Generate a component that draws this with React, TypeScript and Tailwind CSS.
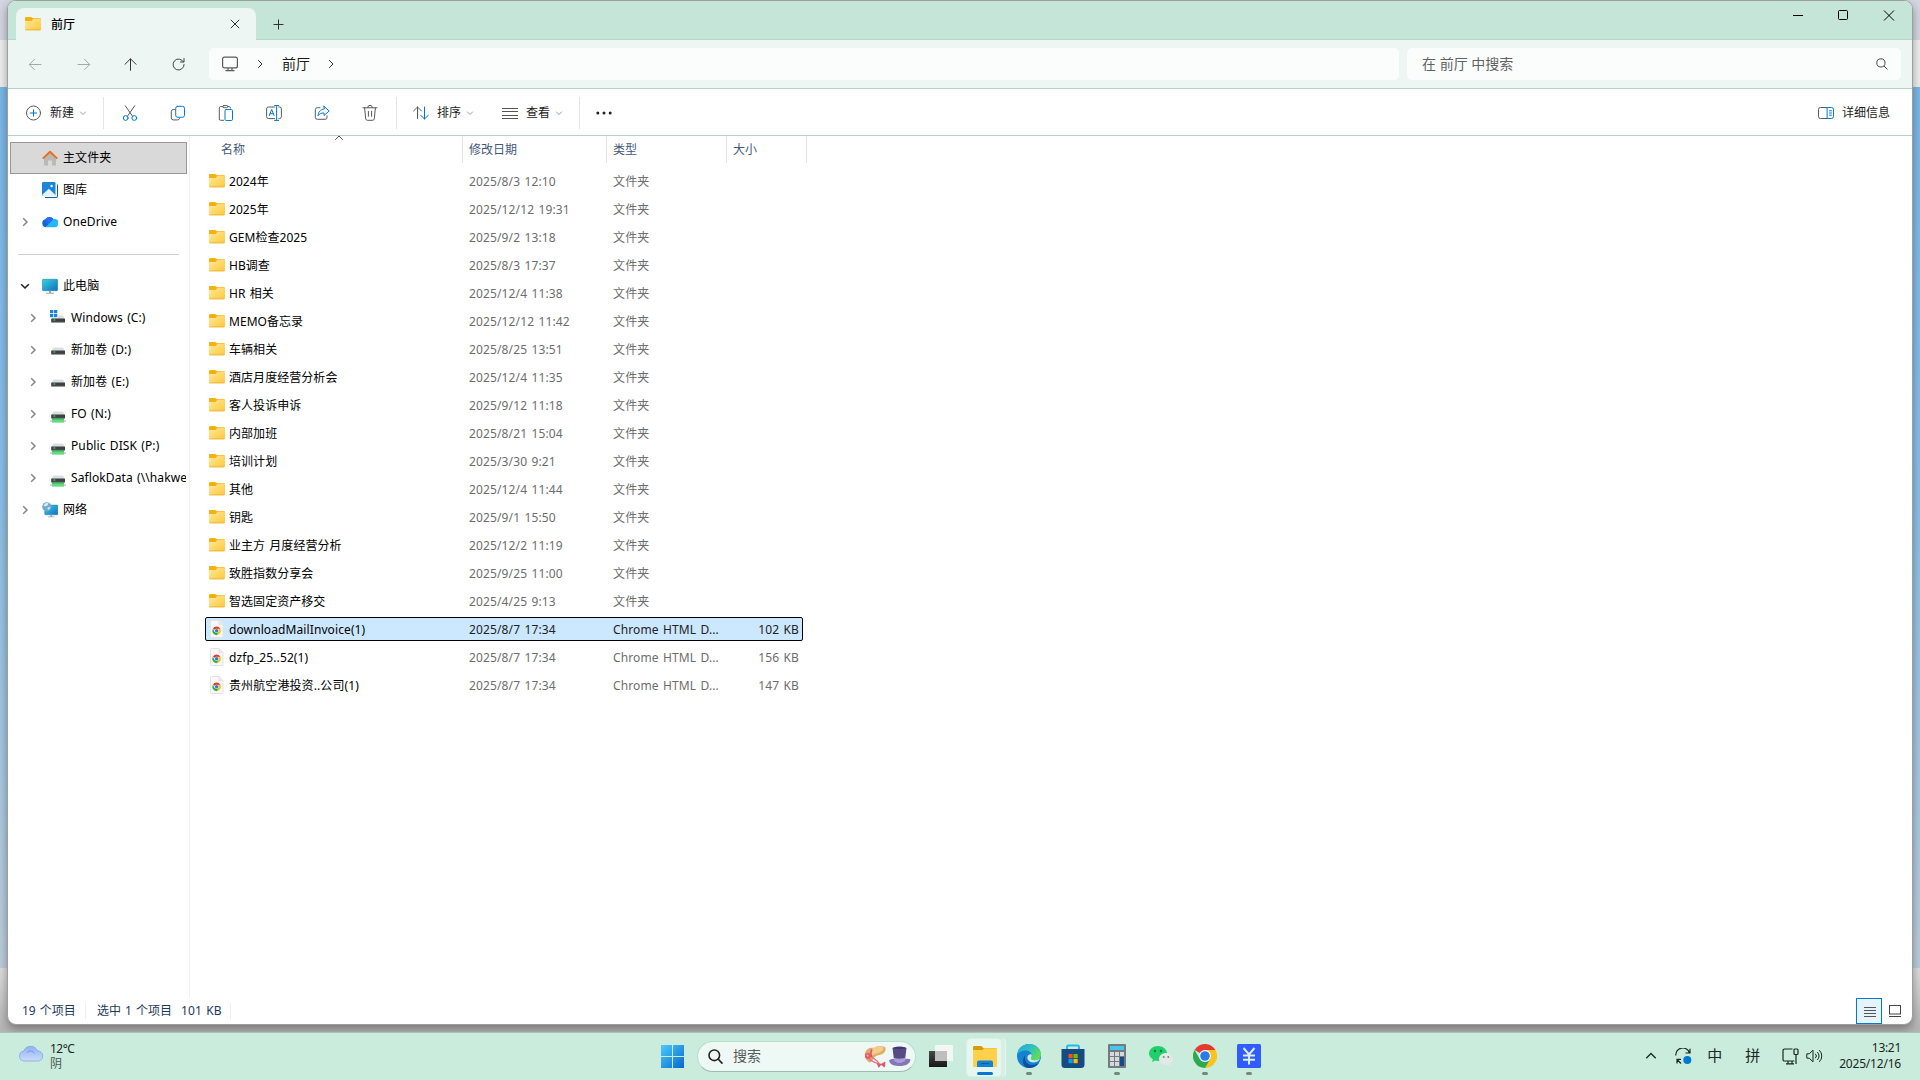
import type { ReactNode } from 'react'
import clsx from 'clsx'

type FileRow = {
  name: string
  date: string
  size?: string
  selected?: boolean
}

const files: FileRow[] = [
  { name: '2024年', date: '2025/8/3 12:10' },
  { name: '2025年', date: '2025/12/12 19:31' },
  { name: 'GEM检查2025', date: '2025/9/2 13:18' },
  { name: 'HB调查', date: '2025/8/3 17:37' },
  { name: 'HR 相关', date: '2025/12/4 11:38' },
  { name: 'MEMO备忘录', date: '2025/12/12 11:42' },
  { name: '车辆相关', date: '2025/8/25 13:51' },
  { name: '酒店月度经营分析会', date: '2025/12/4 11:35' },
  { name: '客人投诉申诉', date: '2025/9/12 11:18' },
  { name: '内部加班', date: '2025/8/21 15:04' },
  { name: '培训计划', date: '2025/3/30 9:21' },
  { name: '其他', date: '2025/12/4 11:44' },
  { name: '钥匙', date: '2025/9/1 15:50' },
  { name: '业主方 月度经营分析', date: '2025/12/2 11:19' },
  { name: '致胜指数分享会', date: '2025/9/25 11:00' },
  { name: '智选固定资产移交', date: '2025/4/25 9:13' },
  { name: 'downloadMailInvoice(1)', date: '2025/8/7 17:34', size: '102 KB', selected: true },
  { name: 'dzfp_25..52(1)', date: '2025/8/7 17:34', size: '156 KB' },
  { name: '贵州航空港投资..公司(1)', date: '2025/8/7 17:34', size: '147 KB' },
]

function Folder() {
  return (
    <svg width="16" height="14" viewBox="0 0 16 14" className="shrink-0">
      <defs>
        <linearGradient id="folder" x1="0" y1="0" x2="1" y2="1">
          <stop offset="0" stopColor="#ffe7a0" />
          <stop offset="1" stopColor="#ffca35" />
        </linearGradient>
      </defs>
      <path d="M0 1.200C0 .5.5 0 1.200 0h4.600c.4 0 .7.100 1 .4L8 1.200h6.900c.6 0 1.100.5 1.100 1.100V6H0z" fill="#f5b10f" />
      <path d="M0 4h6.600L8.200 2H15c.6 0 1 .4 1 1v9c0 .7-.5 1.200-1.200 1.200H1.200C.5 13.200 0 12.700 0 12z" fill="url(#folder)" />
      <path d="M.4 12.900h15.200" stroke="#e9a92c" strokeWidth=".7" />
    </svg>
  )
}

function ChromeDoc() {
  return (
    <svg width="16" height="18" viewBox="0 0 16 18" className="shrink-0">
      <path d="M1.500 1.500a1 1 0 0 1 1-1h7.500l4 4v12a1 1 0 0 1-1 1H2.500a1 1 0 0 1-1-1z" fill="#f8f8f8" stroke="#e2e2e2" />
      <path d="M10 .5v4h4" fill="#e9e9e9" stroke="#dadada" strokeWidth=".6" />
      <g transform="translate(3.300 6.500) scale(.36)">
        <ChromeShapes />
      </g>
    </svg>
  )
}

function ChromeShapes() {
  return (
    <>
      <path d="M12 12 1.600 6A12 12 0 0 1 22.400 6z" fill="#e33b2e" />
      <path d="M12 12V6h10.400A12 12 0 0 1 12 24z" fill="#fcc31e" />
      <path d="M12 12 6.800 15 1.600 6A12 12 0 0 0 12 24l5.200-9z" fill="#2da94f" />
      <circle cx="12" cy="12" r="6" fill="#fff" />
      <circle cx="12" cy="12" r="4.800" fill="#2a7de9" />
    </>
  )
}

function Chevron({ dir, className }: { dir: 'right' | 'down' | 'up'; className?: string }) {
  return (
    <svg
      width="10"
      height="10"
      viewBox="0 0 10 10"
      fill="none"
      stroke="currentColor"
      className={clsx('shrink-0', dir === 'down' && 'rotate-90', dir === 'up' && '-rotate-90', className)}
    >
      <path d="M3.200 1.200 7 5 3.200 8.800" />
    </svg>
  )
}

function Line({ size = 16, children }: { size?: number; children: ReactNode }) {
  return (
    <svg width={size} height={size} viewBox="0 0 16 16" fill="none" stroke="#5a5a5a" strokeLinecap="round" strokeLinejoin="round" className="shrink-0">
      {children}
    </svg>
  )
}

function TitleBar() {
  return (
    <div className="flex h-[39px] border-b border-[#b5d8ca] bg-[#c6e5d9]">
      <div className="ml-2 mt-[7px] flex h-[33px] w-60 shrink-0 items-center rounded-t-lg bg-[#edf6f3] pb-px pl-[9px]">
        <Folder />
        <span className="ml-[10px] w-[179px] pt-[2px] text-xs font-medium text-black">前厅</span>
        <svg width="10" height="10" viewBox="0 0 10 10" stroke="#333">
          <path d="M.8.800l8.400 8.400M9.200.800.800 9.200" />
        </svg>
      </div>
      <svg width="11" height="11" viewBox="0 0 11 11" stroke="#333" className="ml-[17px] mt-[18px]">
        <path d="M5.500.500v10M.5 5.500h10" />
      </svg>
      <div className="ml-auto flex pt-[9px] pr-[17px]">
        <svg width="102" height="11" viewBox="0 0 102 11" fill="none" stroke="#000">
          <path d="M0 5.500h10" />
          <rect x="45.500" y=".5" width="9" height="9" rx="1" />
          <path d="M91 .5l10 10M101 .5 91 10.500" />
        </svg>
      </div>
    </div>
  )
}

function NavBar() {
  return (
    <div className="flex h-[49px] items-center border-b border-[#b5d3c9] bg-[#edf6f3]">
      <svg width="160" height="14" viewBox="0 0 160 14" fill="none" stroke="#a3a9a7" strokeLinecap="round" strokeLinejoin="round" className="ml-5 shrink-0">
        <path d="M13 7.500H1.500M6.500 2.300 1.300 7.500l5.200 5.200" />
        <path d="M50 7.500h11.500M56.500 2.300l5.200 5.200-5.200 5.200" />
        <path d="M102.500 13.300V2M97 7.300 102.500 1.800l5.500 5.500" stroke="#333" />
        <path d="M155.500 5a5.500 5.500 0 1 0 .6 2.500M156 1.500V5h-3.600" stroke="#444" />
      </svg>
      <div className="ml-[21px] flex h-8 w-[1190px] items-center rounded-[5px] bg-[#fbfdfc] pl-[13px]">
        <svg width="16" height="16" viewBox="0 0 16 16" fill="none" stroke="#5a5a5a">
          <rect x=".6" y="1.100" width="14.800" height="10.800" rx="2" strokeWidth="1.200" />
          <path d="M6 12v2.500M10 12v2.500M3.500 14.700h9" strokeWidth="1.200" />
        </svg>
        <Chevron dir="right" className="ml-[17px] text-[#333]" />
        <span className="ml-[17px] text-sm leading-5 text-[#1b1b1b]">前厅</span>
        <Chevron dir="right" className="ml-[16px] text-[#333]" />
      </div>
      <div className="ml-2 flex h-8 w-[494px] items-center rounded-[5px] bg-[#fbfdfc] pl-[15px] pr-[13px] text-sm text-[#5f6462]">
        <span>在 前厅 中搜索</span>
        <svg width="12" height="12" viewBox="0 0 12 12" fill="none" stroke="#4a4a4a" className="ml-auto">
          <circle cx="4.900" cy="4.900" r="4.100" />
          <path d="m7.900 7.900 3.600 3.600" />
        </svg>
      </div>
    </div>
  )
}

function ToolBar() {
  return (
    <div className="flex h-[47px] shrink-0 items-center border-b border-[#b5d3c9] pl-[18px] pt-[2px] text-xs text-[#1b1b1b]">
      <Line>
        <circle cx="7.500" cy="8" r="7" />
        <path d="M7.500 4.800v6.400M4.300 8h6.400" stroke="#0078d4" />
      </Line>
      <span className="ml-2">新建</span>
      <Chevron dir="down" className="ml-1 scale-75 text-[#777]" />
      <div className="ml-[15px] h-8 w-px bg-[#e4e4e4]" />
      <div className="ml-[18px] flex gap-8">
        <Line>
          <path d="M3.300.800 10.400 11M12.700.800 5.600 11" />
          <circle cx="3.700" cy="13" r="2.400" stroke="#0078d4" />
          <circle cx="12.300" cy="13" r="2.400" stroke="#0078d4" />
        </Line>
        <Line>
          <path d="M4.500 4.500H3.300a2 2 0 0 0-2 2v6.400a2 2 0 0 0 2 2h4.400a2 2 0 0 0 1.800-1.400" />
          <rect x="5.700" y="1.300" width="8.800" height="11" rx="2" stroke="#0078d4" />
        </Line>
        <Line>
          <path d="M5.500 15.300H2.600a1.300 1.300 0 0 1-1.300-1.300V2.900a1.300 1.300 0 0 1 1.300-1.300h2.200M10 1.600h1.200a1.300 1.300 0 0 1 1.300 1.300" />
          <rect x="4.800" y=".5" width="5" height="2.200" rx="1.100" />
          <rect x="7" y="4.500" width="7.500" height="11" rx="1.200" stroke="#0078d4" />
        </Line>
        <Line>
          <path d="M8.500 2H2.600A2 2 0 0 0 .6 4v7.600a2 2 0 0 0 2 2h5.900M12.800 2h.6a2 2 0 0 1 2 2v7.600a2 2 0 0 1-2 2h-.6" />
          <path d="M10.600.600v14.800M8.600.600h4M8.600 15.400h4M3.300 10.500 5.700 4.500l2.400 6M4 8.700h3.400" stroke="#0078d4" />
        </Line>
        <Line>
          <path d="M6 2.700H3.300a2 2 0 0 0-2 2v7.600a2 2 0 0 0 2 2H11a2 2 0 0 0 2-2v-1.500" />
          <path d="M10 1.300 15.200 6 10 10.500V8C7.200 7.900 5.500 8.700 4 10.800 4.300 7 6.200 4.400 10 4z" stroke="#0078d4" />
        </Line>
        <Line>
          <path d="M1 2.800h14M2.600 2.800l1.100 11a1.700 1.700 0 0 0 1.700 1.500h5.200a1.700 1.700 0 0 0 1.700-1.500l1.100-11M5.700 2.600a2.300 2.300 0 0 1 4.600 0M6.400 6.300v5M9.600 6.300v5" />
        </Line>
      </div>
      <div className="ml-[18px] h-8 w-px bg-[#e4e4e4]" />
      <div className="ml-4 flex items-center">
        <Line>
          <path d="M4.500 13.500V2M.6 5.900 4.500 2l3.900 3.900" />
          <path d="M11.500 2v12M7.700 10.200l3.800 3.800 3.900-3.800" stroke="#0078d4" />
        </Line>
        <span className="ml-2">排序</span>
        <Chevron dir="down" className="ml-1 scale-75 text-[#777]" />
      </div>
      <svg width="16" height="11" viewBox="0 0 16 11" stroke="#555" className="ml-[27px]">
        <path d="M0 .5h16M0 3.500h16M0 7.500h16M0 10.500h16" />
      </svg>
      <span className="ml-2">查看</span>
      <Chevron dir="down" className="ml-1 scale-75 text-[#777]" />
      <div className="ml-[15px] h-8 w-px bg-[#e4e4e4]" />
      <svg width="16" height="4" viewBox="0 0 16 4" fill="#222" className="ml-4">
        <circle cx="1.800" cy="2" r="1.500" />
        <circle cx="8" cy="2" r="1.500" />
        <circle cx="14.200" cy="2" r="1.500" />
      </svg>
      <div className="ml-auto flex items-center gap-2 pr-[22px]">
        <Line>
          <path d="M9.300 2.500H2.500a2 2 0 0 0-2 2v7a2 2 0 0 0 2 2h6.800" />
          <path d="M9.500 2.500h4a2 2 0 0 1 2 2v7a2 2 0 0 1-2 2h-4zM11.500 5.800h2M11.500 8h2M11.500 10.200h2" stroke="#0078d4" />
        </Line>
        <span>详细信息</span>
      </div>
    </div>
  )
}

const homeIcon = (
  <svg width="16" height="16" viewBox="0 0 16 16">
    <path d="M2 7.500 8 2.200l6 5.300v7a1 1 0 0 1-1 1h-3v-5H6v5H3a1 1 0 0 1-1-1z" fill="#b9b9b9" />
    <path d="M.8 8.600 8 1.700l7.200 6.900" fill="none" stroke="#e8701c" strokeWidth="2" strokeLinejoin="round" />
  </svg>
)

const galleryIcon = (
  <svg width="16" height="16" viewBox="0 0 16 16">
    <path d="M3 2.500h13V14a2 2 0 0 1-2 2H3z" fill="#0b5fa8" />
    <rect x="2" y="1.500" width="13" height="13.500" rx="1" fill="#fff" />
    <rect width="13.500" height="14" rx="1.300" fill="#1a86d9" />
    <path d="M0 13 6.800 6.800 13.500 13c-.2.700-.6 1-1.300 1H1.300C.6 14 .2 13.700 0 13z" fill="#e4f2fc" />
    <circle cx="9.600" cy="4" r="1.200" fill="#fff" />
  </svg>
)

const cloudIcon = (
  <svg width="16" height="16" viewBox="0 0 16 16">
    <path d="M4 13.200a4 4 0 0 1-.6-7.900A5 5 0 0 1 12 5.800z" fill="#1565d8" />
    <path d="M3.600 4.900a5 5 0 0 1 8.600 1.500L6 10.500z" fill="#2a6df0" />
    <path d="M3.800 13.300 10 6.800a3.300 3.300 0 0 1 6 3.200 3.300 3.300 0 0 1-3.300 3.300z" fill="#25b7fb" />
  </svg>
)

const monitorShapes = (
  <>
    <defs>
      <linearGradient id="screen" x1="0" y1="0" x2="1" y2="1">
        <stop offset="0" stopColor="#35d3dc" />
        <stop offset="1" stopColor="#0f6fc0" />
      </linearGradient>
    </defs>
    <rect x=".3" y="1.300" width="15.400" height="11.400" rx="1" fill="url(#screen)" stroke="#2581ad" strokeWidth=".6" />
    <path d="M7 13h2v2H7zM4 14.700h8v1H4z" fill="#9aa7b0" />
  </>
)

const pcIcon = (
  <svg width="16" height="16" viewBox="0 0 16 16">
    {monitorShapes}
  </svg>
)

const networkIcon = (
  <svg width="16" height="16" viewBox="0 0 16 16">
    <g transform="translate(2.500 2) scale(.85)">{monitorShapes}</g>
    <circle cx="4.800" cy="4.800" r="4.600" fill="#6fa9cf" />
    <path d="M1.500 3.500C3 1 5 .6 6.500 1.200 5.800 3.500 3.800 5.500 1.500 3.500zM5 6l3.500-1.500L7 8z" fill="#d8edf8" />
  </svg>
)

function Drive({ kind }: { kind: 'system' | 'local' | 'net' }) {
  return (
    <svg width="16" height="16" viewBox="0 0 16 16" className="overflow-visible">
      {kind === 'net' && (
        <>
          <path d="M2 12h12v4.500H2z" fill="#35d455" />
          <path d="M0 15h16" stroke="#8f9a92" strokeWidth=".8" />
          <path d="M2 15h12" stroke="#7cf394" />
        </>
      )}
      <path d="M3.500 5.500h9.300L15 9H1.300z" fill="#dcdfe2" />
      <rect x="1.200" y="8.500" width="13.800" height="4" rx=".5" fill="#3d3f42" />
      <path d="M1.200 12.300H15" stroke="#9a9a9a" strokeWidth=".6" />
      <path d="M3.500 10h1.800" stroke="#46e35e" strokeWidth="1.200" />
      {kind === 'system' && (
        <>
          <path d="M0 0h8v8H0z" fill="#fff" />
          <path d="M0 0h3.300v3.300H0zM4 0h3.300v3.300H4zM0 4h3.300v3.300H0zM4 4h3.300v3.300H4z" fill="#1786dc" />
        </>
      )}
    </svg>
  )
}

function NavItem({
  label,
  icon,
  arrow,
  nested,
  active,
}: {
  label: string
  icon: ReactNode
  arrow?: 'right' | 'down'
  nested?: boolean
  active?: boolean
}) {
  return (
    <div
      className={clsx(
        'flex h-8 w-[177px] items-center overflow-hidden border text-xs',
        nested ? 'pl-[17px]' : 'pl-[9px]',
        active ? 'border-[#999] bg-[#d9d9d9]' : 'border-transparent'
      )}
    >
      <span className="flex w-[22px] shrink-0">
        {arrow && <Chevron dir={arrow} className={clsx('stroke-[1.5]', arrow === 'down' ? 'text-[#222]' : 'text-[#858585]')} />}
      </span>
      <span className="shrink-0">{icon}</span>
      <span className="ml-[5px] whitespace-nowrap tracking-[0.1px] text-black [word-spacing:1px]">{label}</span>
    </div>
  )
}

function SideBar() {
  return (
    <div className="h-[862px] w-[182px] shrink-0 border-r border-[#f0f0f0] pl-[2px] pt-[6px]">
      <NavItem label="主文件夹" icon={homeIcon} active />
      <NavItem label="图库" icon={galleryIcon} />
      <NavItem label="OneDrive" icon={cloudIcon} arrow="right" />
      <div className="flex h-8 items-center pl-2">
        <div className="h-px w-[161px] bg-[#cfcfcf]" />
      </div>
      <NavItem label="此电脑" icon={pcIcon} arrow="down" />
      <NavItem label="Windows (C:)" icon={<Drive kind="system" />} arrow="right" nested />
      <NavItem label="新加卷 (D:)" icon={<Drive kind="local" />} arrow="right" nested />
      <NavItem label="新加卷 (E:)" icon={<Drive kind="local" />} arrow="right" nested />
      <NavItem label="FO (N:)" icon={<Drive kind="net" />} arrow="right" nested />
      <NavItem label="Public DISK (P:)" icon={<Drive kind="net" />} arrow="right" nested />
      <NavItem label="SaflokData (\\hakwe" icon={<Drive kind="net" />} arrow="right" nested />
      <NavItem label="网络" icon={networkIcon} arrow="right" />
    </div>
  )
}

function FileList() {
  return (
    <div className="flex flex-col text-xs">
      <div className="relative flex h-[27px] text-[#44597a]">
        <div className="flex w-[273px] items-center border-r border-[#e2e2e2] pl-[31px]">名称</div>
        <div className="flex w-36 items-center border-r border-[#e2e2e2] pl-[6px]">修改日期</div>
        <div className="flex w-[120px] items-center border-r border-[#e2e2e2] pl-[6px]">类型</div>
        <div className="flex w-20 items-center border-r border-[#e2e2e2] pl-[6px]">大小</div>
        <Chevron dir="up" className="absolute left-[144px] -top-[3px] text-[#555]" />
      </div>
      <div className="ml-[15px] mt-[4px] w-[598px]">
        {files.map((f) => (
          <div key={f.name} className="flex h-7 items-center">
            <div
              className={clsx(
                'flex h-6 w-full items-center rounded-[2px] border px-[3px] [word-spacing:1px]',
                f.selected ? 'border-black bg-[#cce8ff]' : 'border-transparent'
              )}
            >
              <span className="w-4 shrink-0">{f.size ? <ChromeDoc /> : <Folder />}</span>
              <span className={clsx('ml-1 w-60 pt-[2px] text-black', f.size ? 'tracking-[0.1px]' : 'tracking-[0.05px]')}>{f.name}</span>
              <div className={clsx('flex grow pt-[2px] tracking-[0.13px]', f.selected ? 'text-[#222]' : 'text-[#6d6d6d]')}>
                <span className="w-36">{f.date}</span>
                <span className="w-[114px]">{f.size ? 'Chrome HTML D...' : '文件夹'}</span>
                <span className="ml-auto">{f.size}</span>
              </div>
            </div>
          </div>
        ))}
      </div>
    </div>
  )
}

function StatusBar() {
  return (
    <div className="mt-auto flex h-[26px] items-center text-xs text-[#1e395b] [word-spacing:1px]">
      <span className="ml-[14px] w-16 border-r border-[#eee]">19 个项目</span>
      <span className="ml-[11px]">选中 1 个项目</span>
      <span className="ml-[9px] w-[50px] border-r border-[#eee] tracking-[0.1px]">101 KB</span>
      <div className="ml-auto mr-[11px] flex items-center">
        <div className="flex size-[26px] items-center justify-center border border-[#0078d4] bg-[#e5f3fb]">
          <svg width="12" height="11" viewBox="0 0 12 11" stroke="#555" className="ml-[2px] mt-[2px]">
            <path d="M0 .5h12M0 3.500h12M0 6.500h12M0 9.500h12" />
          </svg>
        </div>
        <svg width="12" height="12" viewBox="0 0 12 12" fill="none" stroke="#444" className="ml-[7px]">
          <rect x=".5" y=".5" width="11" height="8.500" />
          <path d="M0 11.500h12" />
        </svg>
      </div>
    </div>
  )
}

function TaskIcon({ children, running, active }: { children: ReactNode; running?: boolean; active?: boolean }) {
  return (
    <div className="flex w-11 flex-col items-center">
      <svg width="24" height="24" viewBox="0 0 24 24" className="shrink-0">
        {children}
      </svg>
      {running && <div className="mt-1 h-[3px] w-[6px] rounded-full bg-[#75877f]" />}
      {active && <div className="mt-1 h-[3px] w-4 shrink-0 rounded-full bg-[#0078d4]" />}
    </div>
  )
}

function SearchPill() {
  return (
    <div className="mt-[8px] -ml-px flex h-[31px] w-[219px] items-center rounded-full border border-b-[#9dbcb0] border-[#b9dccf] bg-[#eef9f5] pl-[10px] pr-[3px]">
      <svg width="15" height="15" viewBox="0 0 15 15" fill="none" stroke="#222" strokeWidth="1.600" strokeLinecap="round">
        <circle cx="6.300" cy="6.300" r="5.300" />
        <path d="m10.300 10.300 3.700 3.800" />
      </svg>
      <span className="ml-[10px] pb-[2px] text-sm text-[#555c59]">搜索</span>
      <svg width="48" height="24" viewBox="0 0 48 24" className="ml-auto">
        <path d="M1 8C2 4 6 2 10 3c2-2 7-3 11-1 1.500 2 .5 5-2.500 7-3 1.500-6 1-8 3-1.500 2-2 4.500-4.500 5.500C3 17 0 12 1 8z" fill="#e2ac63" />
        <path d="M8 4c3-3 9-3.500 11.500-2 .5 3-3 5.500-7 6.500-2 .5-3.500 1-5 3C5.500 9 5.500 6 8 4z" fill="#f6cc8d" />
        <path d="M8 4.500c-1.500 2.500-1.500 5 0 7.500" fill="none" stroke="#d9536a" strokeWidth="1.600" />
        <circle cx="4" cy="11" r="3" fill="#e2586e" />
        <circle cx="3.600" cy="10.600" r="1.100" fill="#f7a6ae" />
        <path d="M5 13c2 4 7 5 12 6.500M8 12c2 2 6 3 8 8" fill="none" stroke="#e56c7f" strokeWidth="1.300" />
        <path d="m13 19 4 .5-2.500 3M17 19.500l4-2.500-.5 5z" fill="#df5169" stroke="#df5169" strokeWidth=".8" />
        <path d="M25 15.500c2-2 5-2 7 0h7c3-2 5-2.500 7.500-1-.5 4.500-5 6.500-10.500 6.500s-10-1-11-5.500z" fill="#8578b8" />
        <path d="M28.500 3c4-1.600 10-1.600 14 0l-1.700 14c-3 1.600-7.500 1.600-10.500 0z" fill="#574b83" />
        <path d="M29.700 12.500c3 1.600 8.500 1.600 11.700 0l-.6 4.300c-3 1.600-7.500 1.600-10.500 0z" fill="#a99bdc" />
        <path d="M28.500 3c4-1.600 10-1.600 14 0-4 1.400-10 1.400-14 0z" fill="#43386c" />
      </svg>
    </div>
  )
}

function TaskBar() {
  return (
    <div className="flex h-[48px] border-t border-[#a9c2b8] bg-[#c9ecdd]">
      <div className="flex w-[661px] pl-[18px] pt-[8px]">
        <svg width="26" height="17" viewBox="0 0 26 17" className="mt-[4px]">
          <defs>
            <linearGradient id="cloud" x1="0" y1="0" x2="0" y2="1">
              <stop offset="0" stopColor="#8fb2f2" />
              <stop offset="1" stopColor="#ccdcfb" />
            </linearGradient>
          </defs>
          <path d="M6 16a5 5 0 0 1-.3-9.900A7.400 7.400 0 0 1 19.500 6a5 5 0 0 1 .5 10z" fill="url(#cloud)" stroke="#86a5e6" strokeWidth=".8" />
          <path d="M9 7.500c3-2.500 6-1.500 7.500 1" fill="none" stroke="#7195e4" />
        </svg>
        <div className="ml-[6px] text-xs leading-[15px] text-[#1c2622]">
          <div className="tracking-[-0.5px]">12°C</div>
          <div className="text-[#4a5953]">阴</div>
        </div>
      </div>
      <svg width="23" height="23" viewBox="0 0 23 23" className="mt-3 mr-[14px]">
        <defs>
          <linearGradient id="win" x1="0" y1="0" x2="1" y2="1">
            <stop offset="0" stopColor="#4ccbfb" />
            <stop offset="1" stopColor="#0568cb" />
          </linearGradient>
        </defs>
        <path d="M0 0h11v11H0zM12 0h11v11H12zM0 12h11v11H0zM12 12h11v11H12z" fill="url(#win)" />
      </svg>
      <SearchPill />
      <div className="ml-[3px] flex pt-[11px]">
        <TaskIcon>
          <defs>
            <linearGradient id="dark" x1="0" y1="0" x2="0" y2="1">
              <stop offset="0" stopColor="#484848" />
              <stop offset="1" stopColor="#181818" />
            </linearGradient>
          </defs>
          <path d="M0 7h18v16H0z" fill="url(#dark)" />
          <path d="M6 1h18v16H6z" fill="#f4f6f5" />
          <path d="M6 7h12v10H6z" fill="#bdbebd" />
        </TaskIcon>
        <div className="-mt-[6px] flex h-[39px] w-11 shrink-0">
          <div className="ml-[3px] flex w-[36px] justify-center rounded-[4px] border border-[#d9efe6] bg-[#e6f6f0] pt-[5px] pl-[2px]">
            <TaskIcon active>
              <path d="M0 3.500C0 2.500.6 2 1.500 2h6.800l2 2H22c1.200 0 2 .6 2 1.500V9H0z" fill="#d99a0b" />
              <path d="M0 6h9.500L11 4.200h13V22c0 .7-.5 1-1.200 1H1.200C.5 23 0 22.700 0 22z" fill="#ffd04c" />
              <path d="M4 23v-4.500a2 2 0 0 1 2-2h12a2 2 0 0 1 2 2V23z" fill="#1283d3" />
              <path d="M8 19.500h8" stroke="#0c5da3" />
            </TaskIcon>
          </div>
          <div className="w-[4px] rounded-r-[4px] border-r border-[#e4f5ee] bg-[#d7f0e6]" />
        </div>
        <TaskIcon running>
          <defs>
            <linearGradient id="edgeTop" x1="0" y1="0" x2="1" y2=".6">
              <stop offset="0" stopColor="#27a7dc" />
              <stop offset=".5" stopColor="#2cbfc5" />
              <stop offset="1" stopColor="#61dd55" />
            </linearGradient>
          </defs>
          <circle cx="12" cy="12" r="12" fill="#1581d0" />
          <path d="M.2 10.500C1.500 3.500 6.500 0 12.200 0 19 0 24 5 24 10.500c0 3.500-2.700 5.700-6.200 5.700-3 0-4.300-1.200-3.800-2.200.4-.8.8-1.400.8-2.700C14.800 8.500 12 6.400 8.600 6.400 5 6.400 2 8 .2 10.500z" fill="url(#edgeTop)" />
          <path d="M8.300 11.500c-1.500 5.800 2.500 9.500 7 9.500 3 0 5.200-1 7-2.500A12 12 0 0 1 12 24C6 24 4 16 8.300 11.500z" fill="#0d4f9f" />
          <path d="M14.800 11.300c0 1.300-.4 1.900-.8 2.700-.5 1 .8 2.200 3.800 2.200 2 0 3.900-.6 5.200-1.900-.7 2.300-2.600 4.200-6.400 4.200-4.300 0-7-3.200-6-6.200.7-2.200 3.800-2.800 4.200-1z" fill="#c9ecdd" />
        </TaskIcon>
        <TaskIcon>
          <path d="M6 6V3a1.500 1.500 0 0 1 1.500-1.500h9A1.500 1.500 0 0 1 18 3v3" fill="none" stroke="#2ab6ef" strokeWidth="2" />
          <path d="M.5 5h23v15.500a3.500 3.500 0 0 1-3.500 3.500H4a3.500 3.500 0 0 1-3.500-3.500z" fill="#174a80" />
          <path d="M7.500 10h4.200v4.200H7.500z" fill="#f25022" />
          <path d="M12.500 10h4.200v4.200h-4.200z" fill="#7fba00" />
          <path d="M7.500 15h4.200v4.200H7.500z" fill="#00a4ef" />
          <path d="M12.500 15h4.200v4.200h-4.200z" fill="#ffb900" />
        </TaskIcon>
        <TaskIcon running>
          <rect x="3" width="18" height="24" rx="1" fill="#74797e" />
          <path d="M5 2h14v4H5z" fill="#43c7f1" />
          <path d="M5 8h4v4H5zM10 8h4v4h-4zM15 8h4v4h-4zM5 13h4v4H5zM10 13h4v4h-4zM5 18h4v4H5zM10 18h4v4h-4z" fill="#d5d9dc" />
          <path d="M15 13h4v9h-4z" fill="#134a8d" />
        </TaskIcon>
        <TaskIcon>
          <path d="M9 2c5 0 9 3.200 9 7.500S14 17 9 17c-1 0-2-.1-2.800-.4L3.200 18l.6-2.800C1.500 13.800 0 12 0 9.500 0 5.200 4 2 9 2z" fill="#1fd06b" />
          <circle cx="6" cy="7" r="1.200" fill="#0c7a3d" />
          <circle cx="12" cy="7" r="1.200" fill="#0c7a3d" />
          <path d="M17 9c4 0 7 2.700 7 6 0 1.900-1 3.500-2.600 4.600l.5 2.200-2.500-1.200c-.7.200-1.600.3-2.400.3-4 0-7-2.600-7-5.900s3-6 7-6z" fill="#e4e8e6" />
          <circle cx="14.700" cy="13" r="1" fill="#7e8683" />
          <circle cx="19.300" cy="13" r="1" fill="#7e8683" />
        </TaskIcon>
        <TaskIcon running>
          <ChromeShapes />
        </TaskIcon>
        <TaskIcon running>
          <rect width="24" height="24" rx="1.500" fill="#2f5bff" />
          <path d="M6.500 4 12 10.500 17.500 4M12 10.500V20.500M6 11.500h12M6 15.700h12" fill="none" stroke="#d9f0f3" strokeWidth="2" />
        </TaskIcon>
      </div>
      <div className="ml-auto flex items-start pr-[19px] text-[#1c2622]">
        <Chevron dir="up" className="mr-[19px] mt-[18px] scale-125 text-[#1c2622]" />
        <svg width="17" height="17" viewBox="0 0 17 17" fill="none" stroke="#1c2622" strokeWidth="1.200" className="mt-[15px]">
          <path d="M.8 7.500A7 7 0 0 1 14.500 5M15 .8V5h-4.500M6 15.500l-4-4M2 15.500v-4.200h4" />
          <circle cx="12.300" cy="12" r="4" fill="#0078d4" stroke="none" />
        </svg>
        <span className="ml-[15px] mt-[12px] text-[15px] leading-5">中</span>
        <span className="ml-[23px] mt-[12px] text-[15px] leading-5">拼</span>
        <svg width="17" height="17" viewBox="0 0 17 17" fill="none" stroke="#1c2622" strokeWidth="1.200" className="ml-[22px] mt-[15px]">
          <path d="M10.500 1H2.600A1.600 1.600 0 0 0 1 2.600v8.800A1.600 1.600 0 0 0 2.600 13h9.800M6 13v2.800M10 13v2.800M4 15.800h8M14 7v9" />
          <rect x="12" y="1" width="4" height="5.500" rx="1" />
        </svg>
        <svg width="17" height="14" viewBox="0 0 17 14" fill="none" stroke="#1c2622" className="ml-[7px] mt-[16px]">
          <path d="M.8 4.800h2.400L7 1.200v11.600L3.200 9.200H.8z" />
          <path d="M9.300 4.800a3 3 0 0 1 0 4.400M11.300 3a5.500 5.500 0 0 1 0 8M13.300 1.200a8 8 0 0 1 0 11.600" />
        </svg>
        <div className="mt-[7px] ml-[16px] text-right text-xs leading-[16px]">
          <div className="tracking-[-0.3px]">13:21</div>
          <div className="tracking-[-0.2px]">2025/12/16</div>
        </div>
      </div>
    </div>
  )
}

export default function App() {
  return (
    <div className="flex h-[1080px] w-[1920px] flex-col overflow-hidden bg-[linear-gradient(#d3d6e0_0_40px,#eeeeee_40px_87px,#7ab8e9_87px,#8cbfe6_500px,#bccddc_968px,#dddddd_968px,#b5b5b5_1028px)] font-['Noto_Sans','Noto_Sans_CJK_SC',sans-serif]">
      <div className="flex h-[1032px] pl-[7px] pr-[7px]">
        <div className="flex h-[1025px] w-[1906px] flex-col overflow-hidden rounded-[9px] border border-[#9c9f9e] bg-white shadow-[0_4px_10px_rgba(0,0,0,0.35)]">
          <TitleBar />
          <NavBar />
          <ToolBar />
          <div className="flex">
            <SideBar />
            <FileList />
          </div>
          <StatusBar />
        </div>
      </div>
      <TaskBar />
    </div>
  )
}
